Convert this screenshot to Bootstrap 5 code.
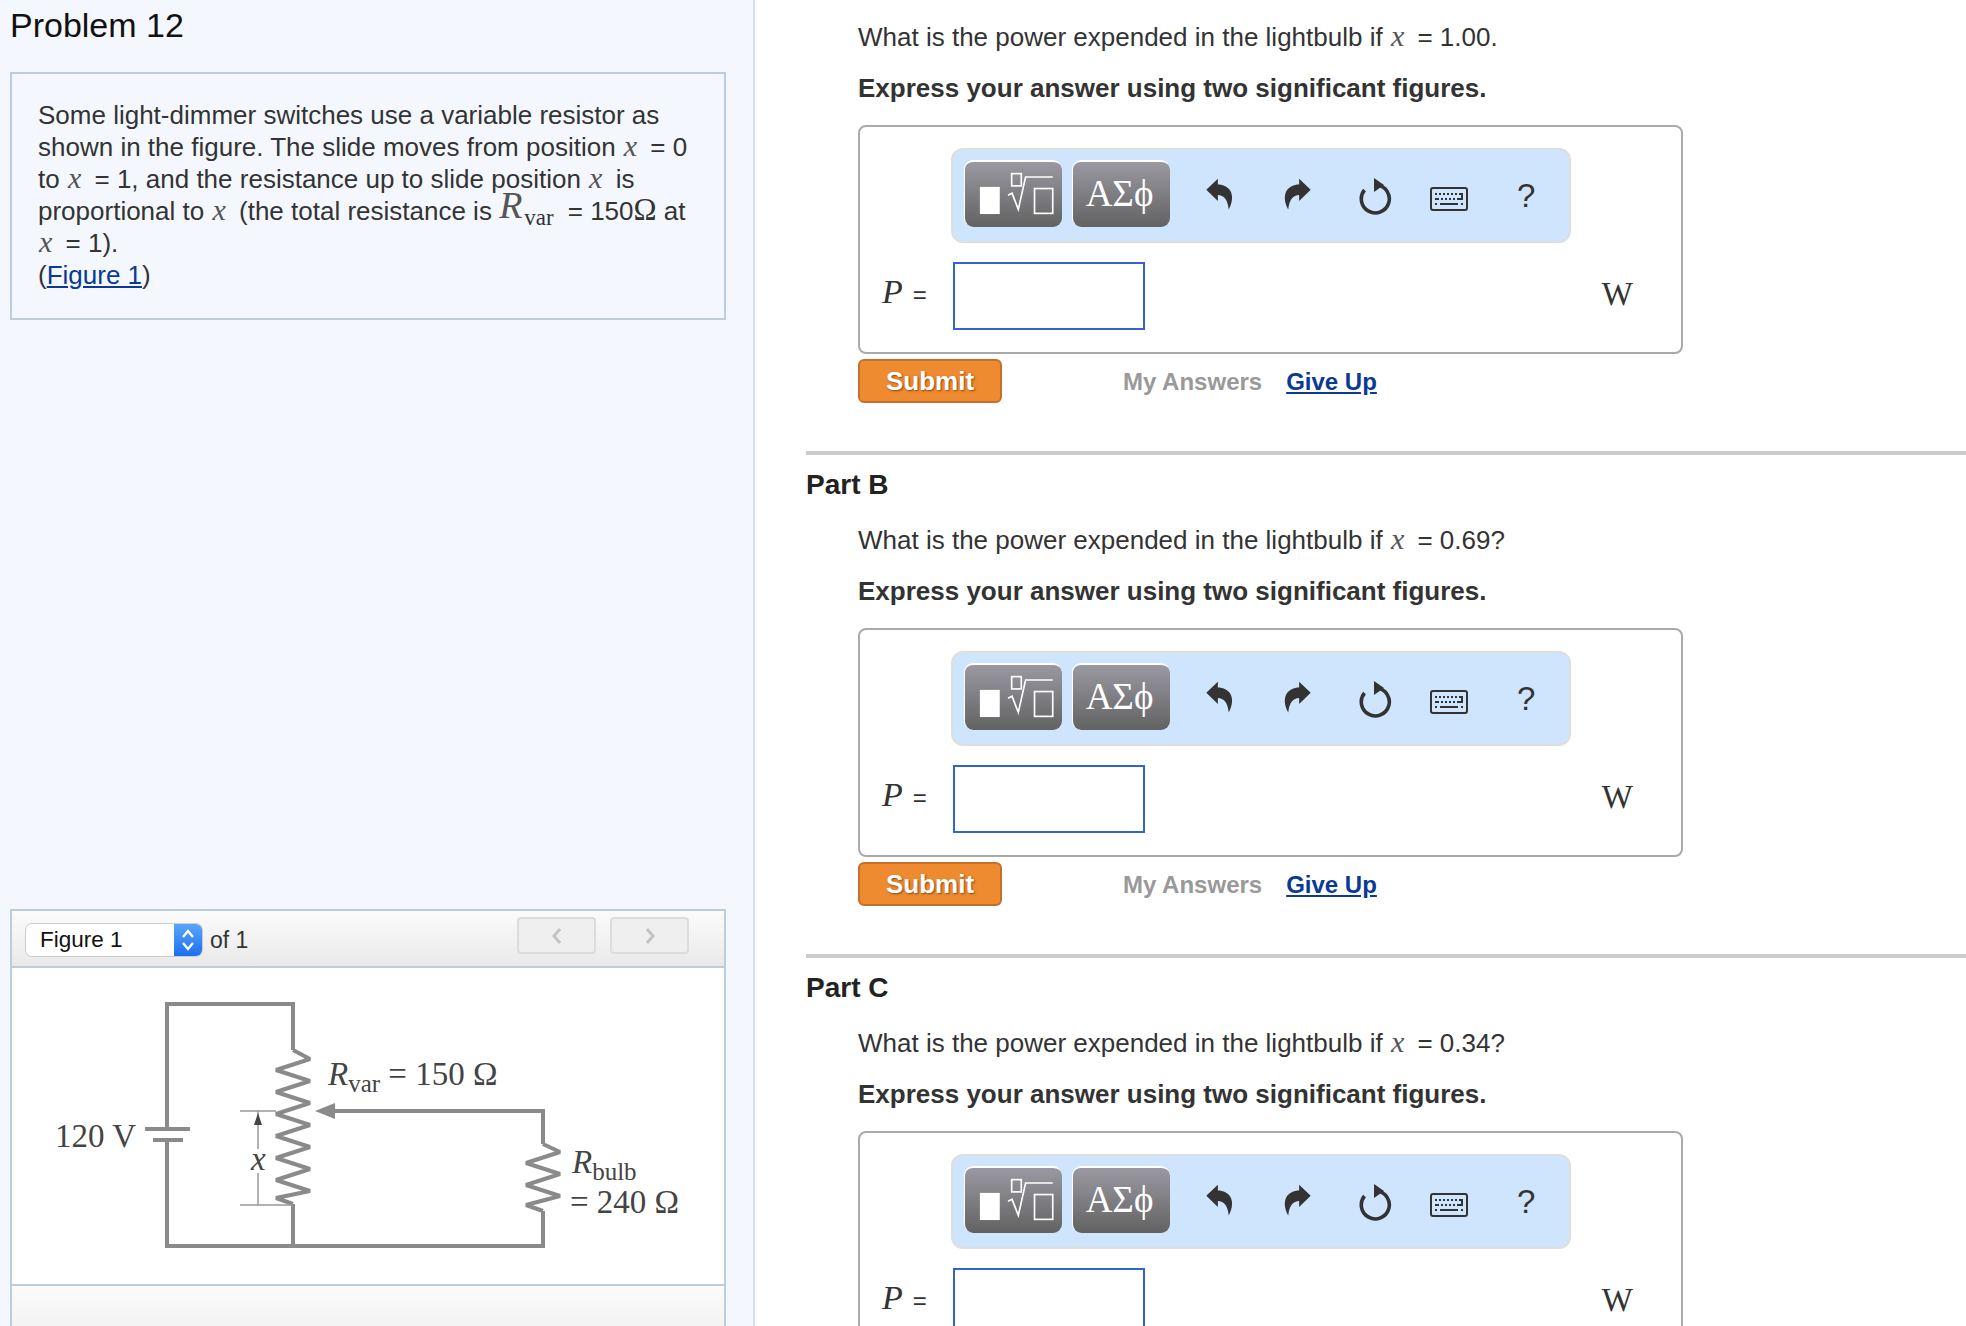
<!DOCTYPE html>
<html lang="en">

<head>
    <meta charset="utf-8">
    <title>Problem 12</title>
    <link rel="stylesheet" href="https://cdn.jsdelivr.net/npm/bootstrap@5.3.0/dist/css/bootstrap.min.css">
    <style>
        html, body {
            height: 1326px;
            overflow: hidden;
        }

        body {
            font-family: "Liberation Sans", Arial, sans-serif;
            font-size: 26px;
            line-height: 32px;
            color: #333;
            background: #fff;
        }

        /* left column */
        .left-pane {
            width: 755px;
            flex: none;
            height: 1326px;
            padding: 0 27px 0 10px;
            background: #f4f8fe;
            border-right: 2px solid #d8e0ea;
        }

        .prob-title {
            font-size: 34px;
            line-height: 50px;
            margin: 0 0 22px 0;
            font-weight: 400;
            color: #111;
        }

        .intro-box {
            height: 248px;
            padding: 25px 19px 0 26px;
            border: 2px solid #bccde0;
        }

        .mvar {
            font-family: "Liberation Serif", serif;
            font-style: italic;
            color: #555;
            font-size: 30px;
            line-height: 0;
            margin: 0 6px 0 1px;
        }

        .rvar {
            font-family: "Liberation Serif", serif;
            font-style: italic;
            font-size: 38px;
            line-height: 0;
            color: #555;
            position: relative;
            top: -2px;
        }

        .rvar-sub {
            font-family: "Liberation Serif", serif;
            font-size: 23px;
            line-height: 0;
            position: relative;
            top: 5px;
            margin: 0 14px 0 2px;
        }

        .ohm {
            font-family: "Liberation Serif", serif;
            font-size: 31px;
            line-height: 0;
        }

        a.fig-link, a.give-up {
            color: #0a3a94;
            text-decoration: underline;
        }

        .figure-box {
            margin-top: 589px;
            border: 2px solid #bccde0;
            background: #fff;
        }

        .figure-head {
            height: 57px;
            padding: 6px 35px 0 13px;
            background: linear-gradient(#fbfbfb, #e9e9e9);
            border-bottom: 2px solid #bccde0;
            color: #333;
            font-size: 23px;
        }

        .fig-select {
            width: 178px;
            height: 34px;
            margin-top: 6px;
            background: #fff;
            border: 1px solid #ccc;
            border-radius: 7px;
            overflow: hidden;
            color: #111;
            line-height: 32px;
            font-size: 22.5px;
        }

        .fig-select span {
            padding-left: 14px;
        }

        .fig-arrows {
            width: 28px;
            background: linear-gradient(#5aa5fb, #1c70f0);
        }

        .of-text {
            margin: 6px 0 0 7px;
            line-height: 34px;
        }

        .pager-group {
            gap: 14px;
        }

        .pager-btn {
            width: 79px;
            height: 37px;
            padding: 0;
            background: #efefef;
            border: 2px solid #dcdcdc;
            border-radius: 4px;
        }

        .figure-body {
            height: 318px;
            border-bottom: 2px solid #bccde0;
        }

        .figure-foot {
            height: 80px;
            background: linear-gradient(#fbfbfb, #ececec);
        }

        /* right column */
        .right-pane {
            flex: 1;
            padding-left: 51px;
            padding-top: 21px;
        }

        .part-block {
            border-top: 4px solid #ccc;
            padding-top: 14px;
            margin-top: 48px;
        }

        .part-title {
            font-size: 28px;
            line-height: 32px;
            font-weight: 700;
            margin: 0 0 23px;
            color: #222;
        }

        .part-inner {
            padding-left: 52px;
        }

        .q-text {
            margin: 0 0 19px;
        }

        .q-note {
            margin: 0 0 21px;
            font-weight: 700;
        }

        .answer-box {
            width: 825px;
            height: 229px;
            border: 2px solid #aaa;
            border-radius: 8px;
            background: #fff;
            padding: 21px 0 0 91px;
        }

        .math-bar {
            width: 620px;
            height: 95px;
            padding: 10px 0 0 11px;
            background: #cfe4fd;
            border: 2px solid #dedede;
            border-radius: 12px;
        }

        .tmpl-btn {
            height: 67px;
            width: 98px;
            padding: 0;
            border: 0;
            border-top: 2px solid #fff;
            border-left: 1px solid #fff;
            border-radius: 9px;
            background: linear-gradient(#9a99a2, #626262);
            color: #fff;
            font-family: "Liberation Serif", serif;
            font-size: 37px;
            line-height: 1;
        }

        .tmpl-btn + .tmpl-btn {
            margin-left: 10px;
            padding: 0 4px 3px 0;
        }

        .bar-tools {
            margin: 2px 0 0 12px;
        }

        .tool-cell {
            width: 76.5px;
            height: 64px;
            color: #333;
        }

        .reset-svg {
            margin: 4px 0 0 4px;
        }

        .key-svg {
            margin: 9px 2px 0 0;
        }

        .help-mark {
            font-size: 33px;
            padding-top: 3px;
            color: #333;
        }

        .entry-row {
            margin: 19px 0 0 -91px;
            height: 68px;
        }

        .eq-label {
            width: 93px;
            padding: 0 0 5px 22px;
            font-size: 24px;
        }

        .eq-label i {
            font-family: "Liberation Serif", serif;
            font-size: 34px;
            margin-right: 10px;
        }

        .ans-input {
            width: 192px;
            height: 68px;
            border: 2px solid #2f67c8;
            border-radius: 0;
        }

        .unit-w {
            margin: 0 48px 5px auto;
            font-family: "Liberation Serif", serif;
            font-size: 33px;
            color: #333;
        }

        .action-row {
            margin-top: 5px;
            height: 44px;
        }

        .submit-btn {
            width: 144px;
            height: 44px;
            padding: 0;
            background: #ee8a2f;
            border: 2px solid #c4702b;
            border-radius: 6px;
            color: #fff;
            font-size: 26px;
            line-height: 1;
            font-weight: 700;
            text-shadow: 1px 1px 2px #8a4a12;
        }

        .my-answers {
            margin: 2px 0 0 121px;
            font-size: 24px;
            font-weight: 700;
            color: #999;
        }

        a.give-up {
            margin: 2px 0 0 24px;
            font-size: 24px;
            font-weight: 700;
        }

        .wire {
            fill: none;
            stroke: #8a8a8a;
            stroke-width: 4;
        }

        .thin {
            fill: none;
            stroke: #999;
            stroke-width: 1.5;
        }

        .fig-lab {
            font-family: "Liberation Serif", serif;
            font-size: 33px;
            fill: #444;
        }
    </style>
</head>

<body>

    <div class="d-flex">

        <!-- Problem and figure -->
        <div class="left-pane">
            <h1 class="prob-title">Problem 12</h1>

            <div class="intro-box">
                Some light-dimmer switches use a variable resistor as shown in the figure. The slide moves from position <span class="mvar">x</span> = 0 to <span class="mvar">x</span> = 1, and the resistance up to slide position <span class="mvar">x</span> is proportional to <span class="mvar">x</span> (the total resistance is <span class="rvar">R</span><span class="rvar-sub">var</span>= 150<span class="ohm">Ω</span> at <span class="mvar">x</span> = 1).<br>
                (<a class="fig-link" href="#">Figure 1</a>)
            </div>

            <div class="figure-box">
                <div class="figure-head d-flex">
                    <div class="fig-select d-flex justify-content-between">
                        <span>Figure 1</span>
                        <div class="fig-arrows d-flex align-items-center justify-content-center">
                            <svg width="14" height="24" viewBox="0 0 14 24">
                                <path d="M2 9 7 3l5 6M2 15l5 6 5-6" fill="none" stroke="#fff" stroke-width="2.4" />
                            </svg>
                        </div>
                    </div>
                    <div class="of-text">of 1</div>
                    <div class="ms-auto d-flex pager-group">
                        <button class="btn pager-btn" type="button">
                            <svg width="12" height="18" viewBox="0 0 12 18">
                                <path d="M9 2 3 9l6 7" fill="none" stroke="#c4c4c4" stroke-width="3" />
                            </svg>
                        </button>
                        <button class="btn pager-btn" type="button">
                            <svg width="12" height="18" viewBox="0 0 12 18">
                                <path d="M3 2l6 7-6 7" fill="none" stroke="#c4c4c4" stroke-width="3" />
                            </svg>
                        </button>
                    </div>
                </div>

                <div class="figure-body">
                    <svg class="d-block" width="715" height="318" viewBox="12 967 715 318">
                        <!-- loop wires, the battery breaks the left side -->
                        <path class="wire" d="M167 1128V1003H293V1049" />
                        <path class="wire" d="M167 1139V1245H543V1210M293 1203V1245M543 1143V1110H332" />
                        <path class="wire" stroke-linejoin="bevel" d="M293 1049 310 1058 276 1069 310 1080 276 1091 310 1102 276 1113 310 1124 276 1135 310 1146 276 1157 310 1168 276 1179 310 1190 276 1197 293 1203" />
                        <path class="wire" stroke-linejoin="bevel" d="M543 1143 560 1151 526 1162 560 1173 526 1184 560 1195 526 1204 543 1210" />
                        <path d="M315 1110 335 1102V1118Z" fill="#8a8a8a" />
                        <path class="wire" d="M145 1128H190M153 1139H183" />
                        <!-- x dimension -->
                        <path class="thin" d="M240 1110H276M240 1204H293M258 1110V1148M258 1172V1204" />
                        <path d="M258 1112 254 1124H262Z" fill="#444" />
                        <text class="fig-lab" x="251" y="1169" font-style="italic" font-size="28">x</text>
                        <text class="fig-lab" x="55" y="1146">120 V</text>
                        <text class="fig-lab" x="328" y="1084"><tspan font-style="italic">R</tspan><tspan font-size="25" dy="7">var</tspan><tspan dy="-7"> = 150 Ω</tspan></text>
                        <text class="fig-lab" x="572" y="1172"><tspan font-style="italic">R</tspan><tspan font-size="25" dy="7">bulb</tspan></text>
                        <text class="fig-lab" x="570" y="1212">= 240 Ω</text>
                    </svg>
                </div>
                <div class="figure-foot"></div>
            </div>
        </div>

        <!-- Parts -->
        <div class="right-pane" id="parts"></div>
    </div>

    <script>
        const parts = [
            { name: "", x: "1.00." },
            { name: "Part B", x: "0.69?" },
            { name: "Part C", x: "0.34?" }
        ];

        const undoIcon = `<svg width="33" height="35" viewBox="40 50 100 105"><path d="M47 88 82 55V72C115 72 140 100 115 148 112 118 100 104 82 104V122Z" fill="currentColor"/></svg>`;
        const redoIcon = `<svg width="33" height="35" viewBox="40 50 100 105"><path d="M133 88 98 55V72C65 72 40 100 65 148 68 118 80 104 98 104V122Z" fill="currentColor"/></svg>`;
        const resetIcon = `<svg class="reset-svg" width="36" height="38" viewBox="0 0 36 38"><path d="M20 8A14 14 0 1 1 7.5 13" fill="none" stroke="currentColor" stroke-width="3.6"/><path d="M17 1 27 8 17 15Z" fill="currentColor"/></svg>`;
        const keyIcon = `<svg class="key-svg" width="38" height="24" viewBox="0 0 38 24"><rect x="1" y="1" width="36" height="22" rx="2" fill="none" stroke="currentColor" stroke-width="2"/><path d="M5 6h2v2H5zM9 6h2v2H9zM13 6h2v2h-2zM17 6h2v2h-2zM21 6h2v2h-2zM25 6h2v2h-2zM29 6h4v7h-6v-2h4V8h-2zM5 11h4v2H5zM11 11h2v2h-2zM15 11h2v2h-2zM19 11h2v2h-2zM23 11h2v2h-2zM5 16h2v2H5zM10 16h18v2H10zM31 16h2v2h-2z" fill="currentColor"/></svg>`;
        const tmplIcon = `<svg width="98" height="65" viewBox="42 50 296 196"><rect x="87" y="125" width="60" height="82" fill="#fff"/><g fill="none" stroke="#fff" stroke-width="5"><rect x="183" y="85" width="29" height="37"/><rect x="252" y="130" width="55" height="75"/><path d="M172 150 184 144 203 193 225 95H307"/></g></svg>`;

        const mathBar = `
            <div class="math-bar d-flex">
                <button class="tmpl-btn" type="button">${tmplIcon}</button>
                <button class="tmpl-btn" type="button">ΑΣϕ</button>
                <div class="bar-tools d-flex">
                    <div class="tool-cell d-flex align-items-center justify-content-center">${undoIcon}</div>
                    <div class="tool-cell d-flex align-items-center justify-content-center">${redoIcon}</div>
                    <div class="tool-cell d-flex align-items-center justify-content-center">${resetIcon}</div>
                    <div class="tool-cell d-flex align-items-center justify-content-center">${keyIcon}</div>
                    <div class="tool-cell d-flex align-items-center justify-content-center help-mark">?</div>
                </div>
            </div>`;

        document.getElementById("parts").innerHTML = parts.map(part => `
            <div class="${part.name ? "part-block" : ""}">
                ${part.name ? `<h2 class="part-title">${part.name}</h2>` : ""}
                <div class="part-inner">
                    <p class="q-text">What is the power expended in the lightbulb if <span class="mvar">x</span> = ${part.x}</p>
                    <p class="q-note">Express your answer using two significant figures.</p>
                    <div class="answer-box">
                        ${mathBar}
                        <div class="entry-row d-flex align-items-center">
                            <div class="eq-label"><i>P</i>=</div>
                            <input class="form-control ans-input" type="text" aria-label="P">
                            <span class="unit-w">W</span>
                        </div>
                    </div>
                    <div class="action-row d-flex align-items-center">
                        <button class="btn submit-btn" type="button">Submit</button>
                        <span class="my-answers">My Answers</span>
                        <a class="give-up" href="#">Give Up</a>
                    </div>
                </div>
            </div>`).join("");
    </script>

    <script src="https://cdn.jsdelivr.net/npm/bootstrap@5.3.0/dist/js/bootstrap.bundle.min.js"></script>
</body>

</html>
